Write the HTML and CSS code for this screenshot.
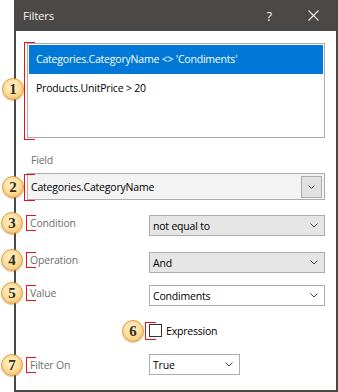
FILE: index.html
```html
<!DOCTYPE html>
<html lang="en">
<head>
  <meta charset="UTF-8">
  <meta name="viewport" content="width=device-width, initial-scale=1.0">
  <title>Filters</title>
  <link rel="stylesheet" href="styles.css">
</head>
<body>
  <div class="page">
    <div class="dialog">
      <div class="titlebar">
        <span class="title">Filters</span>
        <span class="help">?</span>
        <span class="close">
          <svg width="11" height="11" viewBox="0 0 11 11"><path d="M0.5 0.5L10.5 10.5M10.5 0.5L0.5 10.5" stroke="#f0f0f0" stroke-width="1.1" fill="none"/></svg>
        </span>
      </div>

      <div class="content">
        <!-- filter list -->
        <div class="list-box marked">
          <span class="badge">1</span>
          <div class="filter-item selected">Categories.CategoryName &lt;&gt; 'Condiments'</div>
          <div class="filter-item">Products.UnitPrice &gt; 20</div>
        </div>

        <div class="caption">Field</div>
        <div class="field-combo marked">
          <span class="badge">2</span>
          <span class="combo-text">Categories.CategoryName</span>
          <span class="drop-btn">
            <svg width="7" height="4" viewBox="0 0 7 4"><polyline points="0.5,0.5 3.5,3.5 6.5,0.5" stroke="#444" fill="none"/></svg>
          </span>
        </div>

        <div class="row row-condition">
          <label class="row-label"><span class="badge">3</span>Condition</label>
          <div class="combo combo-gray">
            <span class="combo-text">not equal to</span>
            <svg class="chevron" width="8" height="5" viewBox="0 0 8 5"><polyline points="0.5,0.5 4,4 7.5,0.5" stroke="#444" fill="none"/></svg>
          </div>
        </div>

        <div class="row row-operation">
          <label class="row-label"><span class="badge">4</span>Operation</label>
          <div class="combo combo-gray">
            <span class="combo-text">And</span>
            <svg class="chevron" width="8" height="5" viewBox="0 0 8 5"><polyline points="0.5,0.5 4,4 7.5,0.5" stroke="#444" fill="none"/></svg>
          </div>
        </div>

        <div class="row row-value">
          <label class="row-label"><span class="badge">5</span>Value</label>
          <div class="combo">
            <span class="combo-text">Condiments</span>
            <svg class="chevron" width="8" height="5" viewBox="0 0 8 5"><polyline points="0.5,0.5 4,4 7.5,0.5" stroke="#444" fill="none"/></svg>
          </div>
        </div>

        <div class="row row-expression">
          <label class="check">
            <span class="box"><span class="badge">6</span></span>
            Expression
          </label>
        </div>

        <div class="row row-filter">
          <label class="row-label"><span class="badge">7</span>Filter On</label>
          <div class="combo combo-short">
            <span class="combo-text">True</span>
            <svg class="chevron" width="8" height="5" viewBox="0 0 8 5"><polyline points="0.5,0.5 4,4 7.5,0.5" stroke="#444" fill="none"/></svg>
          </div>
        </div>
      </div>
    </div>
  </div>
</body>
</html>
```

FILE: styles.css
```css
/* base */
* {
  box-sizing: border-box;
}

body {
  margin: 0;
  width: 338px;
  height: 392px;
  overflow: hidden;
  background-color: #ffffff;
  font-family: "Open Sans", "Noto Sans", "Liberation Sans", sans-serif;
  font-size: 10.5px;
  letter-spacing: -0.2px;
  color: #000;
}

.page {
  padding-left: 14px;
  height: 392px;
}

/* window frame */
.dialog {
  height: 392px;
  border: 2px solid #4a4947;
  border-top: none;
  display: flex;
  flex-direction: column;
}

.titlebar {
  height: 31px;
  flex: none;
  background-color: #4a4947;
  color: #f2f2f2;
  display: flex;
  align-items: center;
  margin: 0 -2px;
  padding-left: 9px;
  padding-right: 19px;
  font-size: 11.5px;
}

.title {
  flex: 1;
}

.help {
  font-size: 13px;
  margin-right: 36px;
}

.close svg {
  display: block;
}

.content {
  flex: 1;
  padding: 12px 11px 0 11px;
}

/* numbered callouts */
.badge {
  position: absolute;
  width: 22px;
  height: 22px;
  border-radius: 50%;
  background: radial-gradient(circle at 45% 40%, #fff4d2 0%, #fde0a0 45%, #f3b24c 100%);
  border: 1px solid #e09c42;
  box-shadow: 0 1px 1px rgba(150, 100, 30, 0.35);
  font: bold 15px "Liberation Serif", serif;
  letter-spacing: 0;
  color: #3a2a12;
  display: flex;
  align-items: center;
  justify-content: center;
  z-index: 2;
}

/* red brackets */
.marked {
  position: relative;
}

.marked::before {
  content: "";
  position: absolute;
  left: -4px;
  top: -2px;
  bottom: -3px;
  width: 10px;
  border: 1px solid #e4131b;
  border-right: none;
}

/* filter list */
.list-box {
  height: 95px;
  border: 1px solid #ababab;
  padding: 1px;
  background-color: #fff;
}

.list-box .badge {
  left: -26px;
  top: 34px;
}

.filter-item {
  height: 29px;
  line-height: 29px;
  padding-left: 7px;
}

.filter-item.selected {
  background-color: #0078d7;
  color: #ffffff;
}

.caption {
  margin-top: 14px;
  line-height: 16px;
  padding-left: 4px;
  color: #6d6d6d;
}

/* field picker */
.field-combo {
  margin-top: 5px;
  height: 27px;
  border: 1px solid #adadad;
  background-color: #f3f3f3;
  display: flex;
  align-items: center;
  padding: 0 2px 0 3px;
}

.field-combo::before {
  top: 0;
  bottom: -2px;
}

.field-combo .badge {
  left: -26px;
  top: 2px;
}

.field-combo .combo-text {
  flex: 1;
}

.drop-btn {
  width: 21px;
  height: 22px;
  background-color: #e1e1e1;
  border: 1px solid #adadad;
  display: flex;
  align-items: center;
  justify-content: center;
}

.drop-btn svg {
  display: block;
}

/* labelled rows */
.row {
  display: flex;
  align-items: flex-start;
  height: 21px;
}

.row-condition { margin-top: 15px; }
.row-operation { margin-top: 16px; }
.row-value { margin-top: 12px; }
.row-expression { margin-top: 14px; align-items: center; }
.row-filter { margin-top: 13px; }

.row-label {
  position: relative;
  width: 122px;
  flex: none;
  padding-left: 3px;
  line-height: 16px;
  color: #6d6d6d;
}

.row-filter .row-label {
  margin-top: 3px;
}

.row-label::before {
  content: "";
  position: absolute;
  left: -1px;
  top: 0;
  width: 9px;
  height: 14px;
  border: 1px solid #e4131b;
  border-right: none;
}

.row-label .badge {
  left: -26px;
  top: -3px;
}

.combo {
  flex: 1;
  height: 21px;
  border: 1px solid #adadad;
  background-color: #ffffff;
  display: flex;
  align-items: center;
  padding: 0 6px 0 3px;
}

.combo-gray {
  background-color: #e5e5e5;
}

.combo-short {
  flex: none;
  width: 91px;
}

.combo .combo-text {
  flex: 1;
}

.chevron {
  display: block;
}

/* checkbox */
.check {
  margin-left: 122px;
  display: flex;
  align-items: center;
  gap: 4px;
}

.box {
  position: relative;
  width: 13px;
  height: 13px;
  border: 1px solid #333333;
  background-color: #fff;
}

.box::before {
  content: "";
  position: absolute;
  left: -5px;
  top: -3px;
  width: 10px;
  height: 16px;
  border: 1px solid #e4131b;
  border-right: none;
}

.box .badge {
  left: -28px;
  top: -5px;
}
```
